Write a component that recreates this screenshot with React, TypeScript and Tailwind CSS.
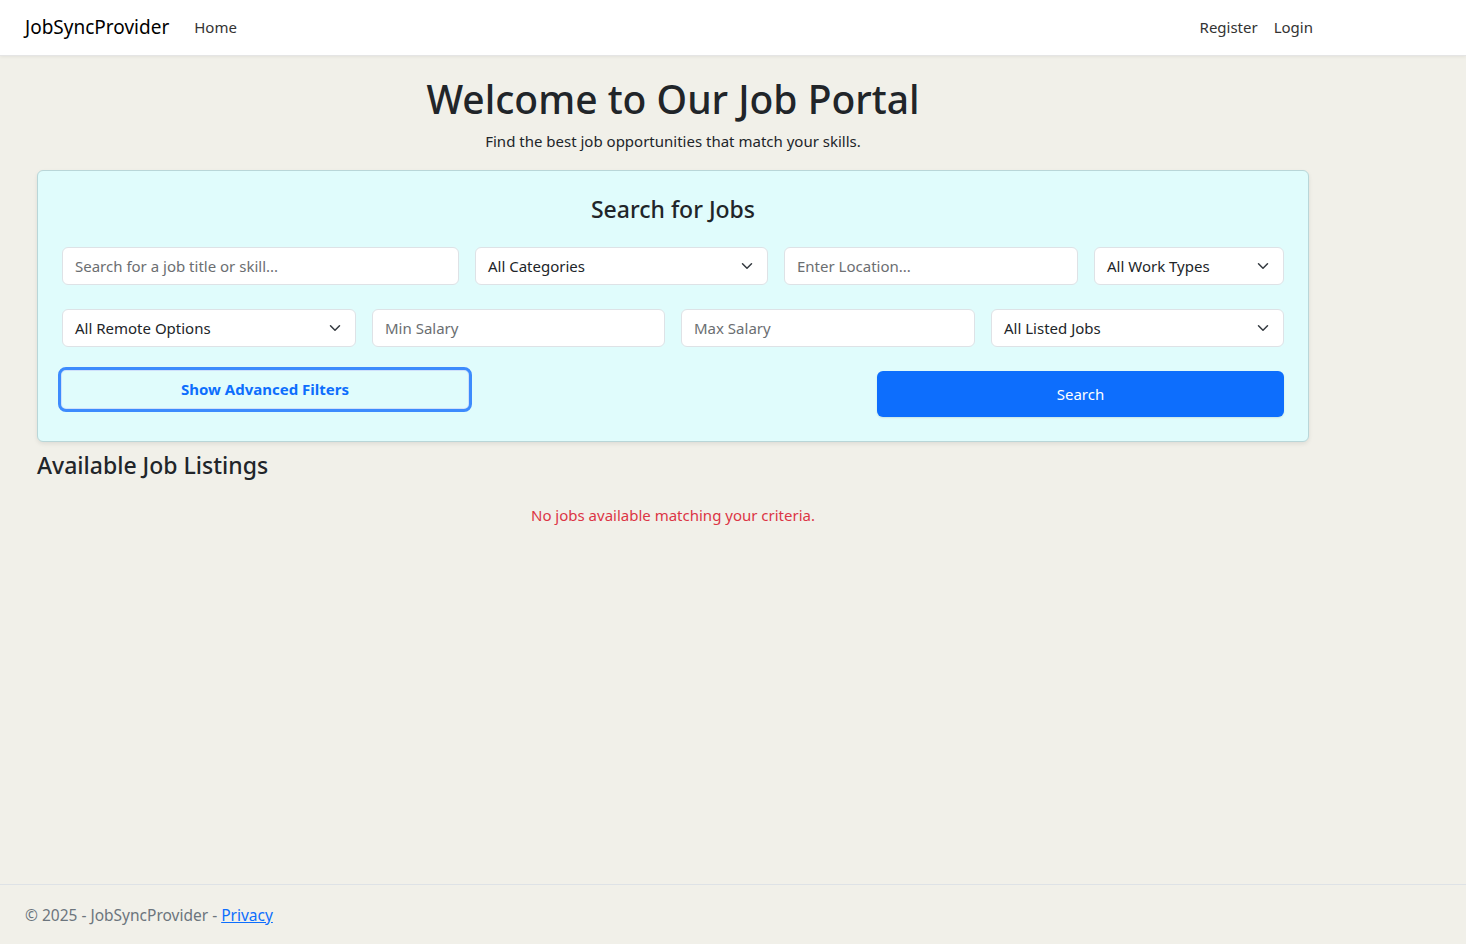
import React from "react";

const font = { fontFamily: '"Noto Sans", "Open Sans", sans-serif' };

function Chevron() {
  return (
    <svg width="16" height="12" viewBox="0 0 16 16" className="shrink-0">
      <path d="M2 5l6 6 6-6" fill="none" stroke="#343a40" strokeWidth="2" strokeLinecap="round" strokeLinejoin="round" />
    </svg>
  );
}

function Input({ placeholder, className }: { placeholder: string; className: string }) {
  return (
    <div className={`h-[38px] shrink-0 bg-white border border-[#dee2e6] rounded-[6px] flex items-center px-3 text-[15px] text-[#6b6e71] ${className}`}>
      {placeholder}
    </div>
  );
}

function Select({ label, className }: { label: string; className: string }) {
  return (
    <div className={`h-[38px] shrink-0 bg-white border border-[#dee2e6] rounded-[6px] flex items-center justify-between pl-3 pr-[12px] text-[15px] text-[#212529] ${className}`}>
      <span>{label}</span>
      <Chevron />
    </div>
  );
}

export default function App() {
  return (
    <div className="min-h-screen flex flex-col bg-[#f1f0e9] text-[#212529]" style={font}>
      <nav className="h-[56px] bg-white border-b border-[#e5e5e5] shadow-[0_1px_3px_rgba(0,0,0,0.06)] flex items-center pl-[25px] pr-[153px]">
        <span className="text-[19px] text-black mr-[25px]">JobSyncProvider</span>
        <span className="text-[15px] text-[#333]">Home</span>
        <div className="ml-auto flex gap-[16px] text-[15px] text-[#333]">
          <span>Register</span>
          <span>Login</span>
        </div>
      </nav>
      <main className="flex-1 pl-[37px] w-[1309px]">
        <h1 className="text-center text-[39px] font-medium leading-[48px] mt-[19px] mb-[6px]">Welcome to Our Job Portal</h1>
        <p className="text-center text-[15px] leading-[24px] mb-[17px]">Find the best job opportunities that match your skills.</p>
        <div className="bg-[#e0fcfc] border border-[#b9d6d8] rounded-[6px] shadow-[0_2px_4px_rgba(0,0,0,0.08)] px-[24px] pt-[24px] pb-[24px]">
          <h3 className="text-center text-[23px] font-medium leading-[29px] mb-[23px]">Search for Jobs</h3>
          <div className="flex gap-[16px]">
            <Input placeholder="Search for a job title or skill..." className="w-[397px]" />
            <Select label="All Categories" className="w-[293px]" />
            <Input placeholder="Enter Location..." className="w-[294px]" />
            <Select label="All Work Types" className="w-[190px]" />
          </div>
          <div className="flex gap-[16px] mt-[24px]">
            <Select label="All Remote Options" className="w-[294px]" />
            <Input placeholder="Min Salary" className="w-[293px]" />
            <Input placeholder="Max Salary" className="w-[294px]" />
            <Select label="All Listed Jobs" className="w-[293px]" />
          </div>
          <div className="flex items-start justify-between">
            <button className="mt-[20px] -ml-[4px] w-[414px] h-[45px] border-[3px] border-[#3d8bfd] rounded-[8px] text-[#0d6efd] font-bold text-[15px] shadow-[inset_0_0_0_1px_#cfe0fb]">
              Show Advanced Filters
            </button>
            <button className="mt-[24px] w-[407px] h-[46px] bg-[#0d6efd] rounded-[6px] text-white text-[15px] shadow-[0_1px_2px_rgba(0,0,0,0.1)]">
              Search
            </button>
          </div>
        </div>
        <h3 className="text-[23px] font-medium leading-[29px] mt-[9px]">Available Job Listings</h3>
        <p className="text-center text-[#dc3545] text-[15px] leading-[24px] mt-[23px]">No jobs available matching your criteria.</p>
      </main>
      <footer className="h-[60px] border-t border-[#dee2e6] pl-[25px] pt-[19px] text-[15.5px] text-[#6c757d]">
        © 2025 - JobSyncProvider - <a className="text-[#0d6efd] underline">Privacy</a>
      </footer>
    </div>
  );
}
